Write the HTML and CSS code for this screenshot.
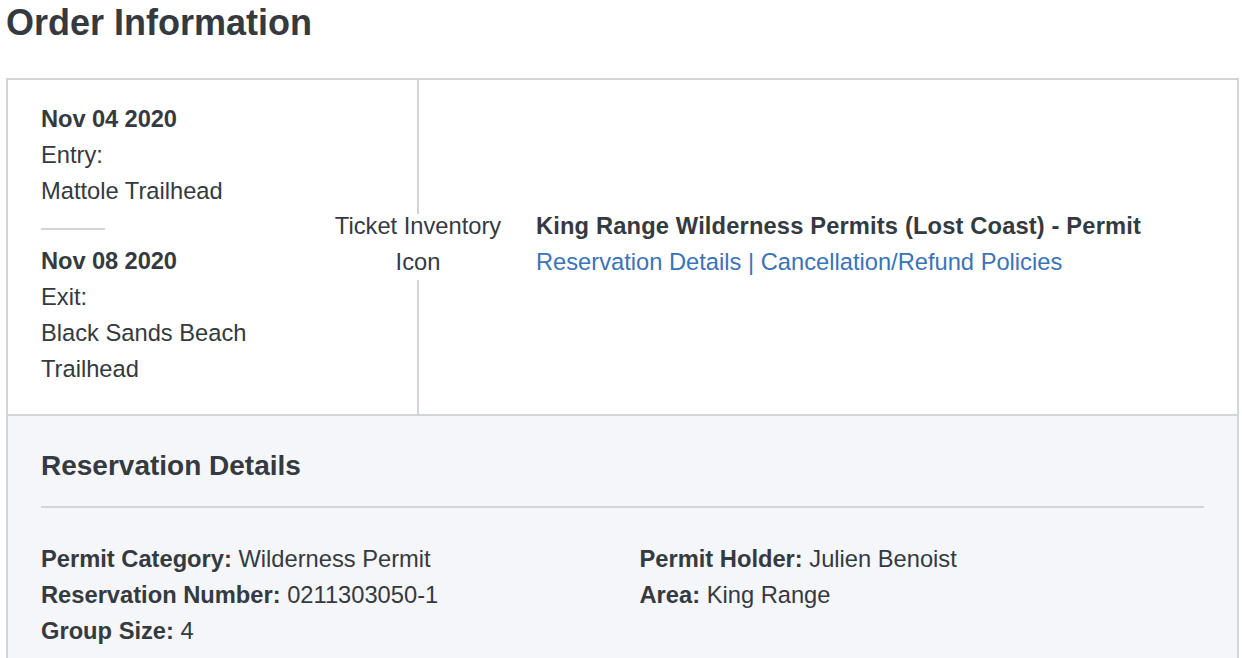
FILE: index.html
```html
<!DOCTYPE html>
<html lang="en">
<head>
<meta charset="utf-8">
<title>Order Information</title>
<link rel="stylesheet" href="styles.css">
</head>
<body>
<div class="page">
  <h1 class="page-title">Order Information</h1>
  <div class="order-box">
    <div class="order-top">
      <div class="dates">
        <div class="date-group">
          <div class="date">Nov 04 2020</div>
          <div>Entry:</div>
          <div class="place">Mattole Trailhead</div>
        </div>
        <div class="date-sep"></div>
        <div class="date-group">
          <div class="date">Nov 08 2020</div>
          <div>Exit:</div>
          <div class="place">Black Sands Beach Trailhead</div>
        </div>
        <div class="ticket-icon">Ticket Inventory<br>Icon</div>
      </div>
      <div class="product">
        <div class="product-title">King Range Wilderness Permits (Lost Coast) - Permit</div>
        <div class="product-links"><a href="#">Reservation Details</a> | <a href="#">Cancellation/Refund Policies</a></div>
      </div>
    </div>
    <div class="details">
      <h2 class="details-title">Reservation Details</h2>
      <div class="details-grid">
        <div class="details-col">
          <div><b>Permit Category:</b> Wilderness Permit</div>
          <div><b>Reservation Number:</b> 0211303050-1</div>
          <div><b>Group Size:</b> 4</div>
        </div>
        <div class="details-col">
          <div><b>Permit Holder:</b> Julien Benoist</div>
          <div><b>Area:</b> King Range</div>
        </div>
      </div>
    </div>
  </div>
</div>
</body>
</html>
```

FILE: styles.css
```css
html, body {
  margin: 0;
  padding: 0;
  background: #ffffff;
}

body {
  font-family: "Liberation Sans", Arial, sans-serif;
  font-size: 23.7px;
  line-height: 36px;
  color: #343a40;
}

.page {
  padding: 0 3px 0 6px;
}

.page-title {
  margin: 0;
  font-size: 36px;
  line-height: 46px;
  font-weight: 700;
  color: #343a40;
}

.order-box {
  margin-top: 32px;
  border: 2px solid #d1d5da;
}

.order-top {
  display: flex;
  border-bottom: 2px solid #d1d5da;
}

.dates {
  position: relative;
  width: 376px;
  flex: none;
  padding: 21px 0 27px 33px;
  border-right: 2px solid #d1d5da;
}

.date {
  font-weight: 700;
  letter-spacing: -0.1px;
}

.place {
  width: 250px;
}

.date-sep {
  width: 64px;
  height: 2px;
  background: #d1d5da;
  margin: 19px 0 13px;
}

.ticket-icon {
  position: absolute;
  top: calc(50% - 3px);
  right: -1px;
  transform: translate(50%, -50%);
  width: 190px;
  text-align: center;
  white-space: nowrap;
  background: linear-gradient(to bottom, transparent 6px, #ffffff 6px);
}

.product {
  flex: 1;
  display: flex;
  flex-direction: column;
  justify-content: center;
  padding: 0 20px 6px 117px;
}

.product-title {
  font-weight: 700;
  letter-spacing: 0.15px;
}

.product-links {
  color: #3b73b9;
}

.product-links a {
  color: #3b73b9;
  text-decoration: none;
}

.details {
  background: #f5f6f9;
  padding: 32px 33px 40px 33px;
}

.details-title {
  margin: 0;
  font-size: 28px;
  line-height: 36px;
  font-weight: 700;
  padding-bottom: 22px;
  border-bottom: 2px solid #d1d5da;
}

.details-grid {
  display: grid;
  grid-template-columns: 1fr 1fr;
  column-gap: 34px;
  padding-top: 33px;
}

.details-col b {
  font-weight: 700;
}
```
